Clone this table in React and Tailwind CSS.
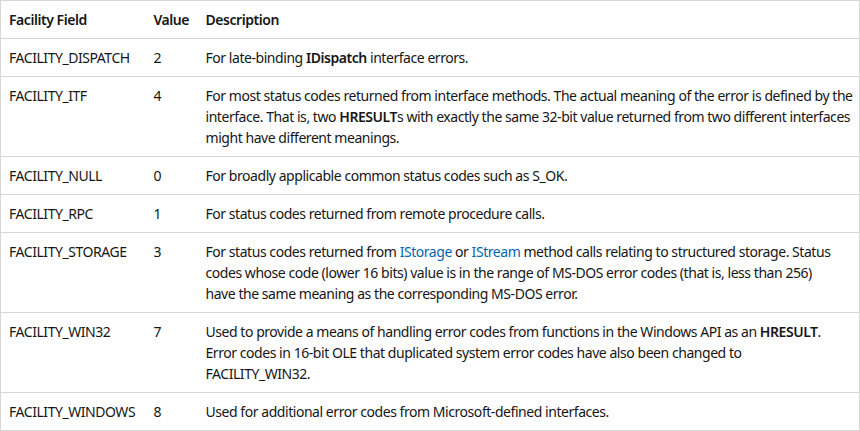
import React from "react";

const rows = [
  {
    field: "FACILITY_DISPATCH",
    value: "2",
    desc: (
      <>
        For late-binding <strong className="font-semibold">IDispatch</strong> interface errors.
      </>
    ),
  },
  {
    field: "FACILITY_ITF",
    value: "4",
    desc: (
      <>
        For most status codes returned from interface methods. The actual meaning of the error is defined by the
        <br />
        interface. That is, two <strong className="font-semibold">HRESULT</strong>s with exactly the same 32-bit value
        returned from two different interfaces
        <br />
        might have different meanings.
      </>
    ),
  },
  {
    field: "FACILITY_NULL",
    value: "0",
    desc: <>For broadly applicable common status codes such as S_OK.</>,
  },
  {
    field: "FACILITY_RPC",
    value: "1",
    desc: <>For status codes returned from remote procedure calls.</>,
  },
  {
    field: "FACILITY_STORAGE",
    value: "3",
    desc: (
      <>
        For status codes returned from <a className="text-[#0065b3]">IStorage</a> or{" "}
        <a className="text-[#0065b3]">IStream</a> method calls relating to structured storage. Status
        <br />
        codes whose code (lower 16 bits) value is in the range of MS-DOS error codes (that is, less than 256)
        <br />
        have the same meaning as the corresponding MS-DOS error.
      </>
    ),
  },
  {
    field: "FACILITY_WIN32",
    value: "7",
    desc: (
      <>
        Used to provide a means of handling error codes from functions in the Windows API as an{" "}
        <strong className="font-semibold">HRESULT</strong>.
        <br />
        Error codes in 16-bit OLE that duplicated system error codes have also been changed to
        <br />
        FACILITY_WIN32.
      </>
    ),
  },
  {
    field: "FACILITY_WINDOWS",
    value: "8",
    desc: <>Used for additional error codes from Microsoft-defined interfaces.</>,
  },
];

export default function App() {
  return (
    <div className="w-[860px] bg-white text-[#161616] font-['Noto_Sans',sans-serif] text-[14px] leading-[21px] tracking-[-0.45px]">
      <table className="w-full table-fixed border-collapse border border-[#d6d6d6] text-left">
        <thead>
          <tr className="border-b border-[#d6d6d6]">
            <th className="w-[145px] px-2 py-2 font-semibold align-top whitespace-nowrap">Facility Field</th>
            <th className="w-[52px] px-2 py-2 font-semibold align-top whitespace-nowrap">Value</th>
            <th className="px-2 py-2 font-semibold align-top">Description</th>
          </tr>
        </thead>
        <tbody>
          {rows.map((r) => (
            <tr key={r.field} className="border-b border-[#d6d6d6]">
              <td className="px-2 py-2 align-top whitespace-nowrap">{r.field}</td>
              <td className="px-2 py-2 align-top">{r.value}</td>
              <td className="px-2 py-2 align-top whitespace-nowrap">{r.desc}</td>
            </tr>
          ))}
        </tbody>
      </table>
    </div>
  );
}
